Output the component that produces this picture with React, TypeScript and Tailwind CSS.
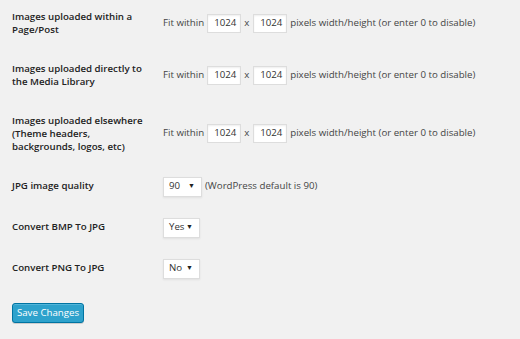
import React from 'react';

const font = { fontFamily: '"Open Sans", "Noto Sans", sans-serif' };

function NumInput({ value }: { value: string }) {
  return (
    <div className="flex h-[19px] w-[34px] items-center border border-[#dddddd] bg-white pl-[6px] text-[9.7px] text-[#333] shadow-[inset_0_1px_2px_rgba(0,0,0,0.07)]">
      {value}
    </div>
  );
}

function Select({ value, width }: { value: string; width: string }) {
  return (
    <div
      className={`flex h-[20px] items-center justify-between border border-[#dddddd] bg-white pl-[5px] pr-[6px] text-[9.7px] text-[#333] shadow-[0_1px_2px_rgba(0,0,0,0.07)] ${width}`}
    >
      <span>{value}</span>
      <span className="text-[7px] text-[#222]">▼</span>
    </div>
  );
}

function SizeField() {
  return (
    <div className="flex items-center text-[9.7px] text-[#444]">
      <span className="mr-[3px]">Fit within</span>
      <NumInput value="1024" />
      <span className="ml-[3px] mr-[4px]">x</span>
      <NumInput value="1024" />
      <span className="ml-[3px]">pixels width/height (or enter 0 to disable)</span>
    </div>
  );
}

function Row({ label, children, short }: { label: React.ReactNode; children: React.ReactNode; short?: boolean }) {
  return (
    <div className={`flex ${short ? 'h-[41px]' : ''}`}>
      <div className="w-[163px] shrink-0 pl-[12px] pr-[10px] pt-[13px] pb-[13px] text-[9.7px] font-semibold leading-[13px] text-[#222]">
        {label}
      </div>
      <div className="flex items-center">{children}</div>
    </div>
  );
}

export default function App() {
  return (
    <div className="h-[339px] w-[520px] overflow-hidden bg-[#f1f1f1]" style={font}>
      <div className="-mt-[3px]">
        <Row label="Images uploaded within a Page/Post">
          <SizeField />
        </Row>
        <Row label="Images uploaded directly to the Media Library">
          <SizeField />
        </Row>
        <Row label="Images uploaded elsewhere (Theme headers, backgrounds, logos, etc)">
          <SizeField />
        </Row>
        <Row label="JPG image quality" short>
          <div className="flex items-center text-[9.7px] text-[#444]">
            <Select value="90" width="w-[39px]" />
            <span className="ml-[3px]">(WordPress default is 90)</span>
          </div>
        </Row>
        <Row label="Convert BMP To JPG" short>
          <Select value="Yes" width="w-[37px]" />
        </Row>
        <Row label="Convert PNG To JPG" short>
          <Select value="No" width="w-[37px]" />
        </Row>
      </div>
      <div className="mt-[14px] flex pl-[12px]">
        <button className="h-[20px] w-[72px] rounded-[3px] border border-[#0074a2] bg-[#2ea2cc] text-[9.7px] text-white shadow-[inset_0_1px_0_rgba(120,200,230,0.5),0_1px_0_rgba(0,0,0,0.15)]">
          Save Changes
        </button>
      </div>
    </div>
  );
}
